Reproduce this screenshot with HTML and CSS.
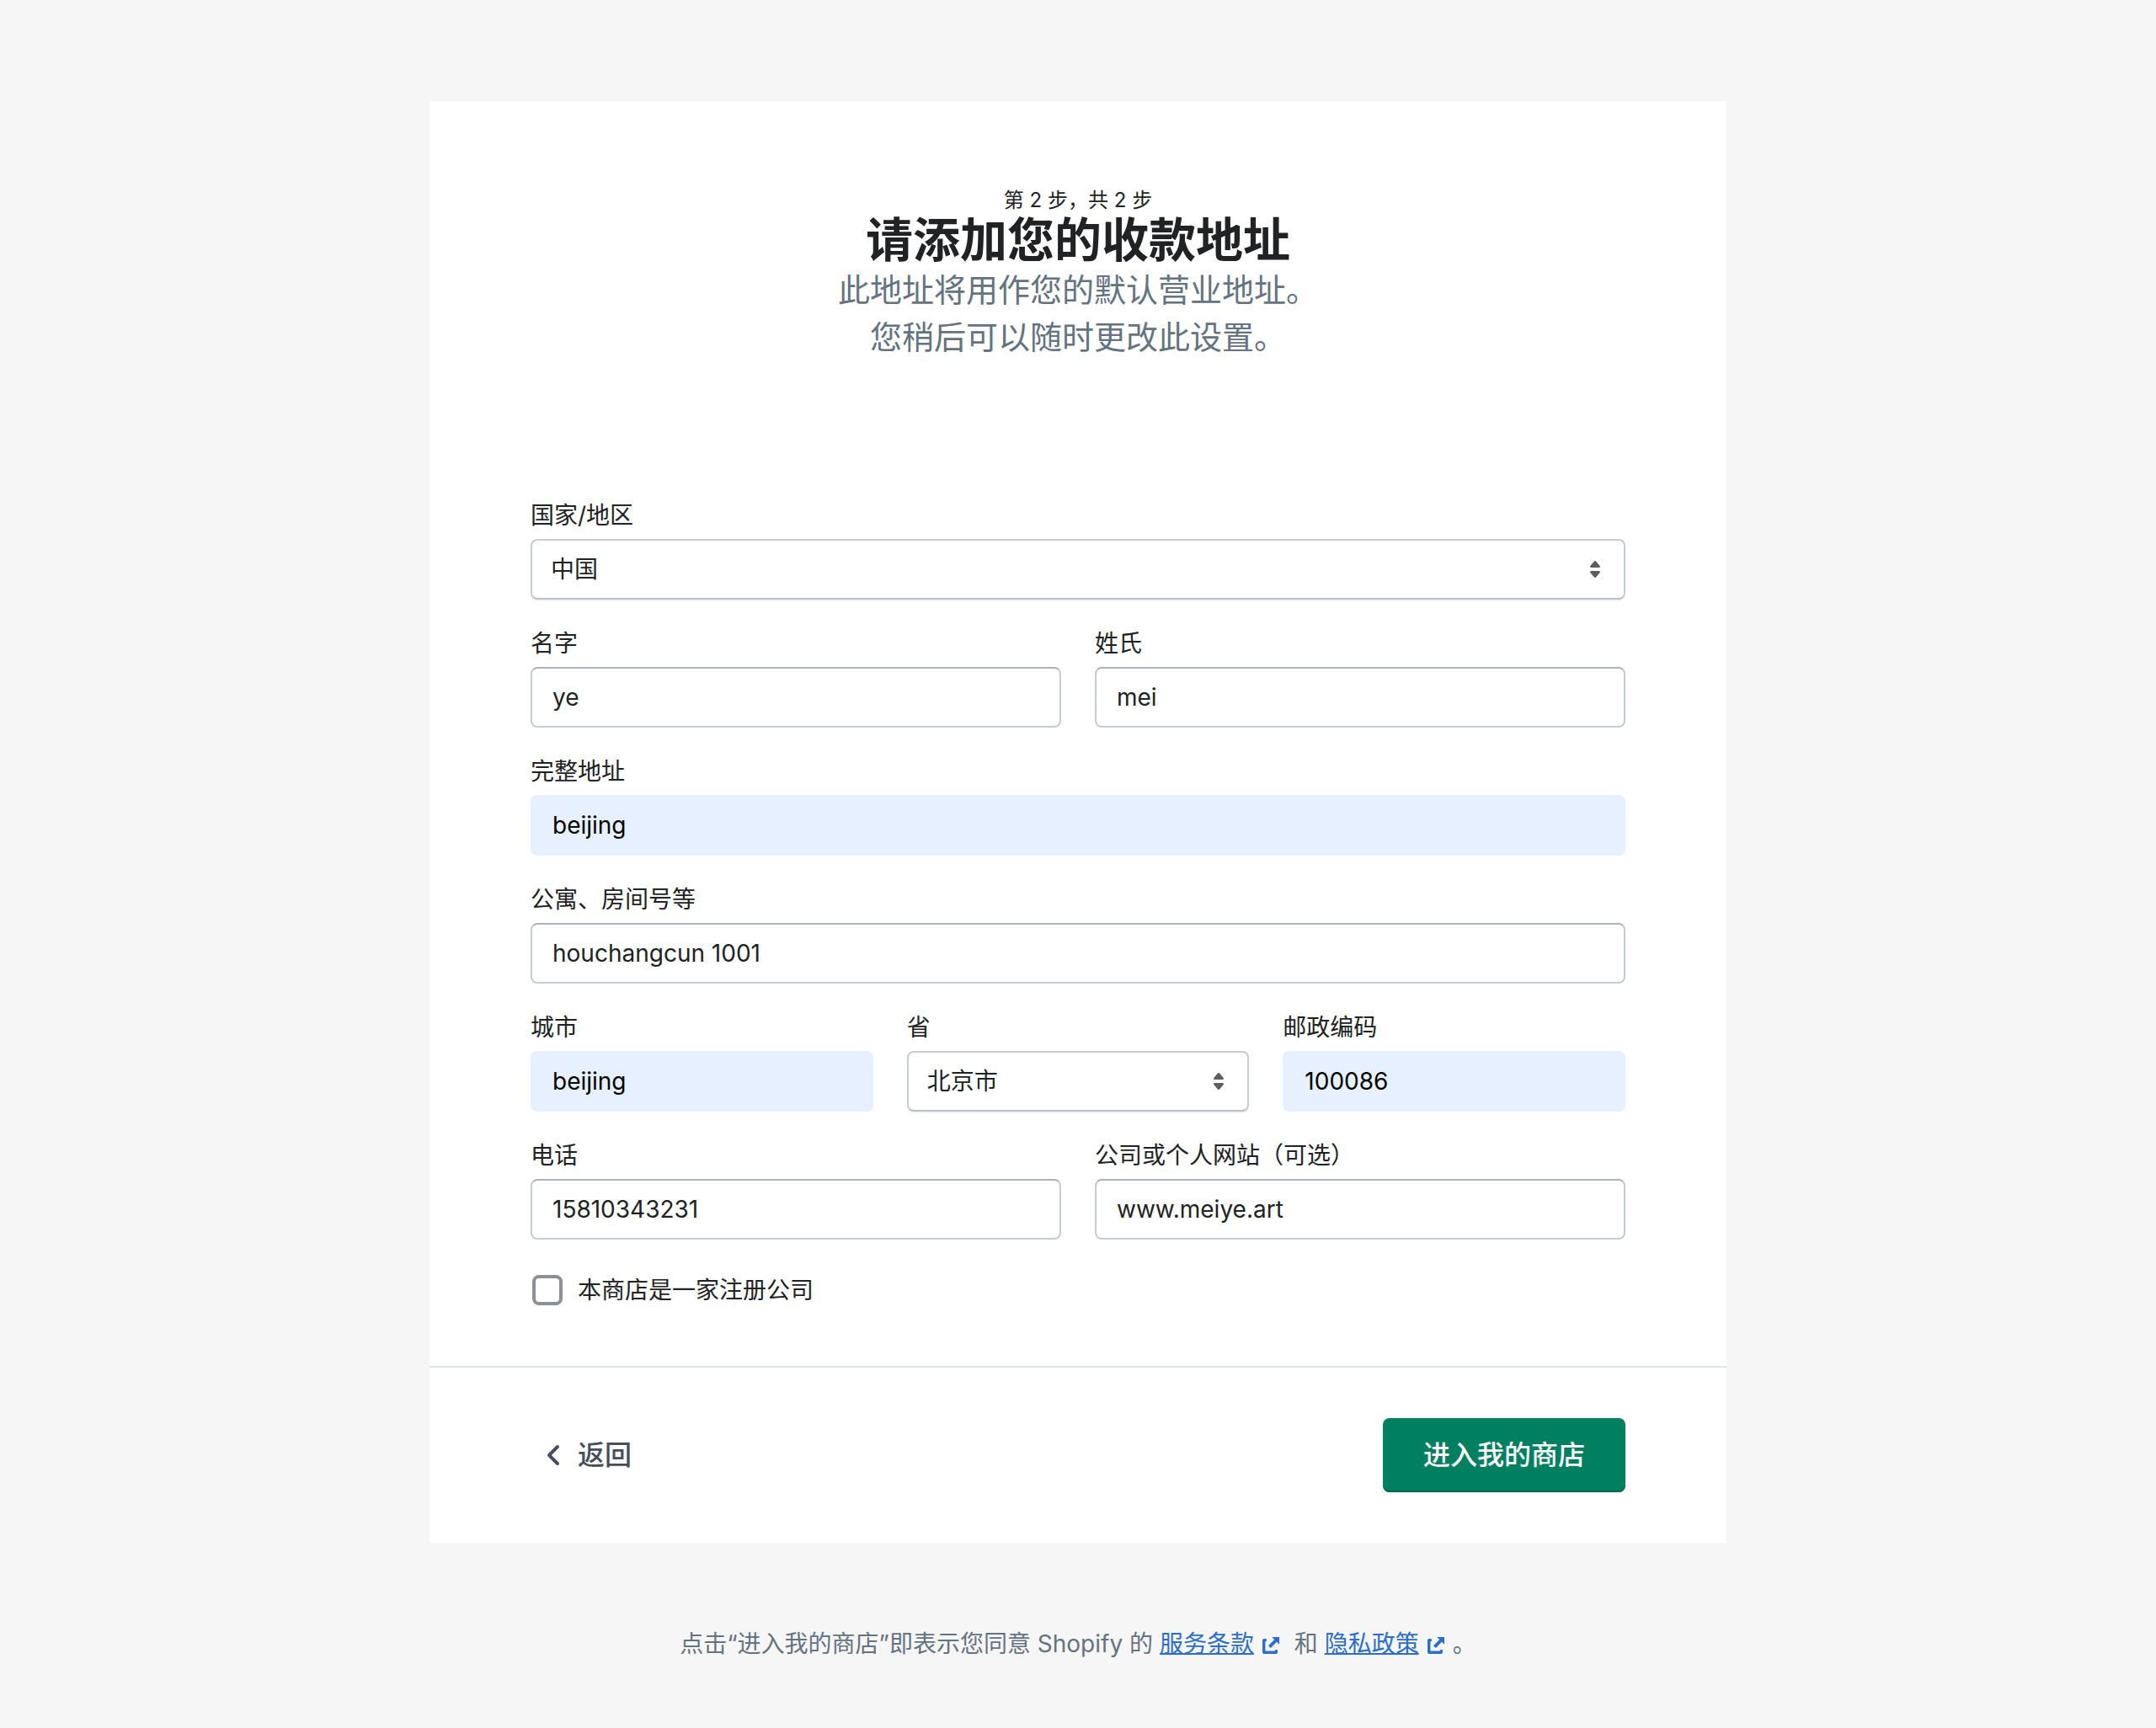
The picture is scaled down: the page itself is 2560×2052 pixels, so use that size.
FILE: index.html
```html
<!DOCTYPE html>
<html lang="zh-CN">
<head>
  <meta charset="utf-8">
  <meta name="viewport" content="width=device-width, initial-scale=1">
  <title>请添加您的收款地址</title>
  <link rel="stylesheet" href="styles.css">
</head>
<body>
  <main class="card">
    <form>
      <header class="card-header">
        <p class="step">第 2 步，共 2 步</p>
        <h1>请添加您的收款地址</h1>
        <p class="subtitle">此地址将用作您的默认营业地址。<br>您稍后可以随时更改此设置。</p>
      </header>

      <section class="fields">
        <div class="field">
          <label for="country">国家/地区</label>
          <div class="select">
            <select id="country">
              <option>中国</option>
            </select>
            <svg class="icon" viewBox="0 0 20 20"><path d="M7.676 9h4.648c.563 0 .879-.603.53-1.014l-2.323-2.746a.708.708 0 00-1.062 0l-2.324 2.746c-.347.411-.032 1.014.531 1.014zm4.648 2H7.676c-.563 0-.878.603-.53 1.014l2.323 2.746c.27.32.792.32 1.062 0l2.323-2.746c.349-.411.033-1.014-.53-1.014z"/></svg>
          </div>
        </div>

        <div class="row">
          <div class="field">
            <label for="first-name">名字</label>
            <input type="text" id="first-name" value="ye">
          </div>
          <div class="field">
            <label for="last-name">姓氏</label>
            <input type="text" id="last-name" value="mei">
          </div>
        </div>

        <div class="field">
          <label for="address">完整地址</label>
          <input type="text" id="address" class="autofilled" value="beijing">
        </div>

        <div class="field">
          <label for="apartment">公寓、房间号等</label>
          <input type="text" id="apartment" value="houchangcun 1001">
        </div>

        <div class="row">
          <div class="field">
            <label for="city">城市</label>
            <input type="text" id="city" class="autofilled" value="beijing">
          </div>
          <div class="field">
            <label for="province">省</label>
            <div class="select">
              <select id="province">
                <option>北京市</option>
              </select>
              <svg class="icon" viewBox="0 0 20 20"><path d="M7.676 9h4.648c.563 0 .879-.603.53-1.014l-2.323-2.746a.708.708 0 00-1.062 0l-2.324 2.746c-.347.411-.032 1.014.531 1.014zm4.648 2H7.676c-.563 0-.878.603-.53 1.014l2.323 2.746c.27.32.792.32 1.062 0l2.323-2.746c.349-.411.033-1.014-.53-1.014z"/></svg>
            </div>
          </div>
          <div class="field">
            <label for="zip">邮政编码</label>
            <input type="text" id="zip" class="autofilled" value="100086">
          </div>
        </div>

        <div class="row">
          <div class="field">
            <label for="phone">电话</label>
            <input type="tel" id="phone" value="15810343231">
          </div>
          <div class="field">
            <label for="website">公司或个人网站（可选）</label>
            <input type="text" id="website" value="www.meiye.art">
          </div>
        </div>

        <div class="checkbox">
          <input type="checkbox" id="registered">
          <label for="registered">本商店是一家注册公司</label>
        </div>
      </section>

      <div class="card-footer">
        <button type="button" class="back-button">
          <svg class="icon" viewBox="0 0 20 20"><path d="M12 16a.997.997 0 01-.707-.293l-5-5a.999.999 0 010-1.414l5-5a.999.999 0 111.414 1.414L8.414 10l4.293 4.293A.999.999 0 0112 16z"/></svg>
          返回
        </button>
        <button type="submit" class="primary-button">进入我的商店</button>
      </div>
    </form>
  </main>

  <footer class="legal">
    <p>点击“进入我的商店”即表示您同意 Shopify 的 <a href="#"><span>服务条款</span><svg class="icon" viewBox="0 0 20 20"><path d="M13.2 12.4a.8.8 0 01.8.8V14a1 1 0 01-1 1H6a1 1 0 01-1-1V7a1 1 0 011-1h.8a.8.8 0 010 1.6h-.1v5.7h5.7v-.1a.8.8 0 01.8-.8zM10.6 5H15v4.4l-1.5-1.5-3.6 3.6-1.4-1.4 3.6-3.6L10.6 5z"/></svg></a> 和 <a href="#"><span>隐私政策</span><svg class="icon" viewBox="0 0 20 20"><path d="M13.2 12.4a.8.8 0 01.8.8V14a1 1 0 01-1 1H6a1 1 0 01-1-1V7a1 1 0 011-1h.8a.8.8 0 010 1.6h-.1v5.7h5.7v-.1a.8.8 0 01.8-.8zM10.6 5H15v4.4l-1.5-1.5-3.6 3.6-1.4-1.4 3.6-3.6L10.6 5z"/></svg></a>。</p>
  </footer>
</body>
</html>
```

FILE: styles.css
```css
* {
  box-sizing: border-box;
}

body, h1, p {
  margin: 0;
}

body {
  padding: 120px 40px 80px;
  background-color: #f6f6f6;
  color: #202223;
  font-family: Inter, "Noto Sans CJK SC", sans-serif;
  font-size: 28px;
  line-height: 40px;
}

input, select, button {
  font: inherit;
  color: inherit;
}

.icon {
  width: 40px;
  height: 40px;
  fill: currentColor;
}

.card {
  max-width: 1540px;
  margin: 0 auto;
  background-color: #fff;
}

/* Header */
.card-header {
  padding: 102px 120px 164px;
  text-align: center;
}

.step {
  font-size: 24px;
  line-height: 32px;
}

h1 {
  font-size: 56px;
  font-weight: 600;
  line-height: 62px;
}

.subtitle {
  color: #637381;
  font-size: 38px;
  line-height: 56px;
}

/* Form fields */
.fields {
  display: flex;
  flex-direction: column;
  gap: 32px;
  padding: 0 120px 62px;
}

.row {
  display: flex;
  gap: 40px;
}

.field {
  display: flex;
  flex: 1;
  flex-direction: column;
  gap: 8px;
  min-width: 0;
}

.field input,
.field select {
  width: 100%;
  height: 72px;
  padding: 0 24px;
  border: 2px solid #c9cccf;
  border-radius: 8px;
  background-color: #fff;
}

.field input {
  border-top-color: #aeb4b9;
}

.field .autofilled {
  border-color: #e6f0ff;
  background-color: #e6f0ff;
  color: #000;
}

.select {
  position: relative;
}

.field select {
  display: block;
  appearance: none;
  padding: 0 22px;
  border-bottom-color: #babfc3;
  box-shadow: 0 2px 0 rgba(0, 0, 0, 0.05);
}

.select .icon {
  position: absolute;
  top: 16px;
  right: 16px;
  color: #5c5f62;
  pointer-events: none;
}

.checkbox {
  display: flex;
  align-items: center;
  gap: 18px;
  padding: 8px 2px;
}

.checkbox input {
  appearance: none;
  width: 36px;
  height: 36px;
  margin: 0;
  border: 4px solid #8c9196;
  border-radius: 8px;
}

/* Actions */
.card-footer {
  display: flex;
  align-items: center;
  justify-content: space-between;
  padding: 60px 120px;
  border-top: 2px solid #dfe3e8;
}

.card-footer button {
  height: 88px;
  border: none;
  border-radius: 8px;
  font-size: 32px;
  font-weight: 500;
  cursor: pointer;
}

.back-button {
  display: flex;
  align-items: center;
  gap: 8px;
  padding: 0 8px;
  background: none;
  color: #454f5b;
}

.primary-button {
  padding: 0 48px;
  background-color: #008060;
  color: #fff;
  box-shadow: inset 0 -2px 0 #00664d, 0 2px 0 rgba(0, 0, 0, 0.05);
}

.legal {
  padding-top: 100px;
  color: #637381;
  text-align: center;
}

.legal a {
  color: #2c6ecb;
  text-decoration: none;
}

.legal a span {
  text-decoration: underline;
  text-decoration-thickness: 2px;
}

.legal .icon {
  vertical-align: middle;
}

@media only screen and (max-width: 900px) {
  .row,
  .card-footer {
    flex-direction: column;
    gap: 32px;
  }

  .card-header,
  .fields,
  .card-footer {
    padding-left: 40px;
    padding-right: 40px;
  }
}
```
